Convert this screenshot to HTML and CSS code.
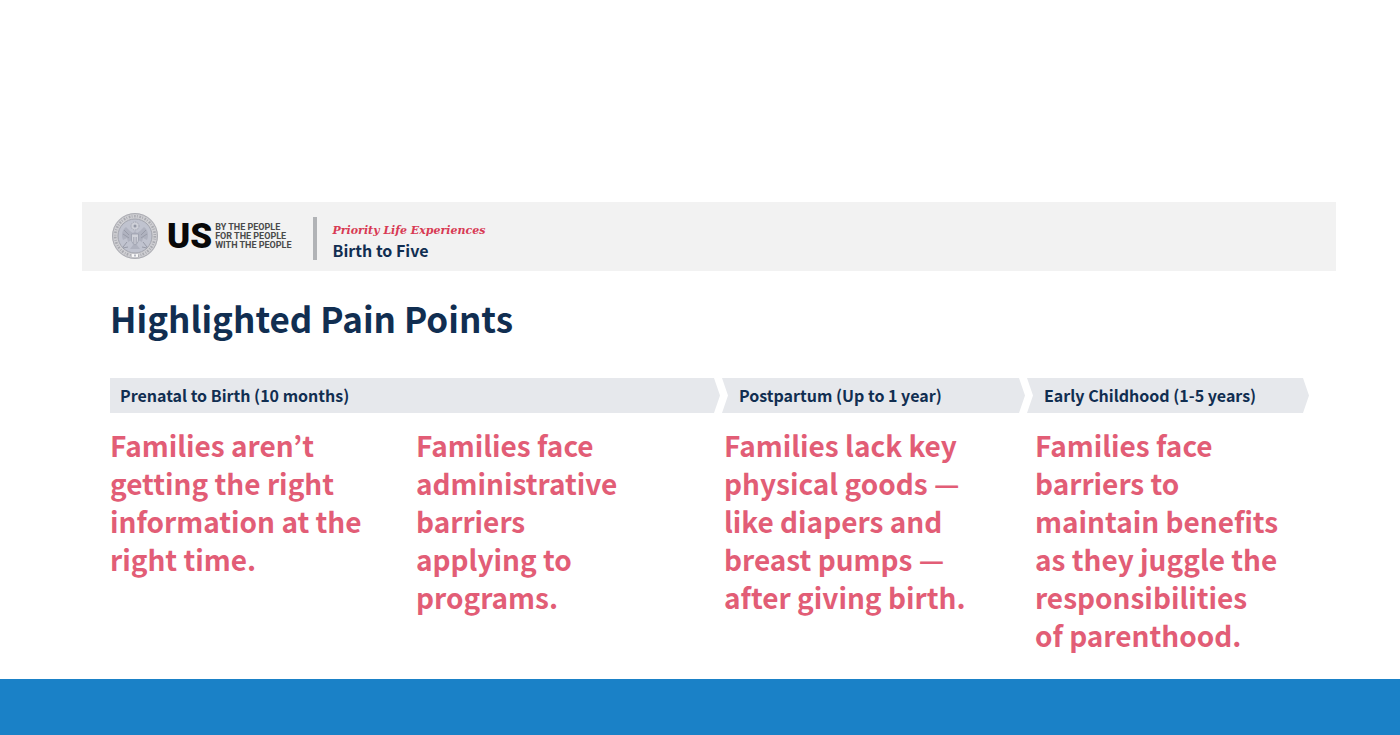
FILE: index.html
```
<!DOCTYPE html>
<html lang="en">
<head>
<meta charset="utf-8">
<meta name="viewport" content="width=device-width, initial-scale=1">
<title>Highlighted Pain Points</title>
<link rel="stylesheet" href="styles.css">
</head>
<body>
<div class="slide">
  <header class="banner">
    <svg class="seal" viewBox="0 0 48 48" aria-hidden="true">
      <circle cx="24" cy="24" r="23" fill="#cfcfd3"/>
      <circle cx="24" cy="24" r="22.4" fill="none" stroke="#a9aab0" stroke-width="1"/>
      <circle cx="24" cy="24" r="19.800" fill="none" stroke="#a9aab0" stroke-width="2.600" stroke-dasharray="1.6 1.3 .8 1.700"/>
      <circle cx="24" cy="24" r="17" fill="#c0c3cf" stroke="#a3a5ae" stroke-width="1"/>
      <circle cx="24" cy="14" r="4" fill="#ced0d8" stroke="#a2a5b1" stroke-width="1" stroke-dasharray="1.5 .8"/>
      <circle cx="24" cy="14" r="1.500" fill="#9498a6"/>
      <path d="M22 21l-3-2-4-4c-4 3-5 8-3 13l4-2 1 4 4-2 1 5-3 4h10l-3-4 1-5 4 2 1-4 4 2c2-5 1-10-3-13l-4 4-3 2-2-2z" fill="#afb2bf"/>
      <path d="M13 18l5 5M12 22l6 4M35 18l-5 5M36 22l-6 4M16 30l-4 5M32 30l4 5M12 36l5-1M36 36l-5-1" fill="none" stroke="#989ba8" stroke-width="1"/>
      <path d="M20.500 22h7v6c0 2-2 4-3.500 5-1.500-1-3.500-3-3.500-5z" fill="#d0d2da" stroke="#999dab" stroke-width=".8"/>
      <path d="M22.500 25v6M24 25v7M25.500 25v6" stroke="#a0a3b0" stroke-width=".7"/>
      <path d="M21 43.500h6" stroke="#f8f8f8" stroke-width="3"/>
      <path d="M24 42.500v2" stroke="#a0a3b0" stroke-width="1.500"/>
    </svg>
    <span class="us">US</span>
    <p class="motto">BY THE PEOPLE<br>FOR THE PEOPLE<br>WITH THE PEOPLE</p>
    <div class="topic">
      <p class="series">Priority Life Experiences</p>
      <p class="subject">Birth to Five</p>
    </div>
  </header>
  <main class="content">
    <h1 class="title">Highlighted Pain Points</h1>
    <div class="phases">
      <h2 class="phase phase-first">Prenatal to Birth (10 months)</h2>
      <h2 class="phase">Postpartum (Up to 1 year)</h2>
      <h2 class="phase">Early Childhood (1-5 years)</h2>
    </div>
    <div class="points">
      <p class="point">Families aren’t<br>getting the right<br>information at the<br>right time.</p>
      <p class="point">Families face<br>administrative<br>barriers<br>applying to<br>programs.</p>
      <p class="point">Families lack key<br>physical goods —<br>like diapers and<br>breast pumps —<br>after giving birth.</p>
      <p class="point">Families face<br>barriers to<br>maintain benefits<br>as they juggle the<br>responsibilities<br>of parenthood.</p>
    </div>
  </main>
</div>
<footer class="footer"></footer>
</body>
</html>
```
FILE: styles.css
```
* {
  box-sizing: border-box;
  margin: 0;
}

body {
  display: flex;
  flex-direction: column;
  min-height: 100vh;
  background: #fff;
  color: #112e51;
  font-family: "Noto Sans CJK KR", "Noto Sans", sans-serif;
  font-weight: 700;
}

.slide {
  flex: 1;
  padding: 202px 64px 0 82px;
}

.banner {
  display: flex;
  align-items: center;
  padding: 10px 29px 11px;
  background: #f2f2f2;
}

.seal {
  width: 48px;
  height: 48px;
}

.us {
  margin-left: 8px;
  padding-top: 2px;
  color: #080808;
  font: 900 35px/46px Roboto, sans-serif;
}

.motto {
  margin-left: 3px;
  padding-top: 1px;
  color: #4a4a4a;
  font: 700 9px/9px Roboto, sans-serif;
}

.topic {
  margin: 4px 0 0 21px;
  padding: 5px 0 0 16px;
  border-left: 4px solid #b1b3b6;
}

.series {
  color: #d83a54;
  font: italic 700 11px/18px "DejaVu Serif", serif;
}

.subject {
  font-size: 16px;
  line-height: 20px;
}

.content {
  padding: 23px 27px 20px 28px;
}

.title {
  font-size: 35px;
  line-height: 48px;
}

.phases {
  display: grid;
  grid-template-columns: 610fr 303fr 282fr;
  gap: 2px;
  margin-top: 36px;
}

.phase {
  padding: 0 17px;
  background: #e6e8ec;
  clip-path: polygon(0 0, calc(100% - 6px) 0, 100% 50%, calc(100% - 6px) 100%, 0 100%, 6px 50%);
  font-size: 16px;
  line-height: 35px;
}

.phase-first {
  padding-left: 10px;
  clip-path: polygon(0 0, calc(100% - 6px) 0, 100% 50%, calc(100% - 6px) 100%, 0 100%);
}

.points {
  display: grid;
  grid-template-columns: 306fr 308fr 311fr 274fr;
  margin-top: 13px;
}

.point {
  color: #e25d76;
  font-size: 28px;
  line-height: 38px;
}

.footer {
  height: 56px;
  background: #1a81c7;
}
```
